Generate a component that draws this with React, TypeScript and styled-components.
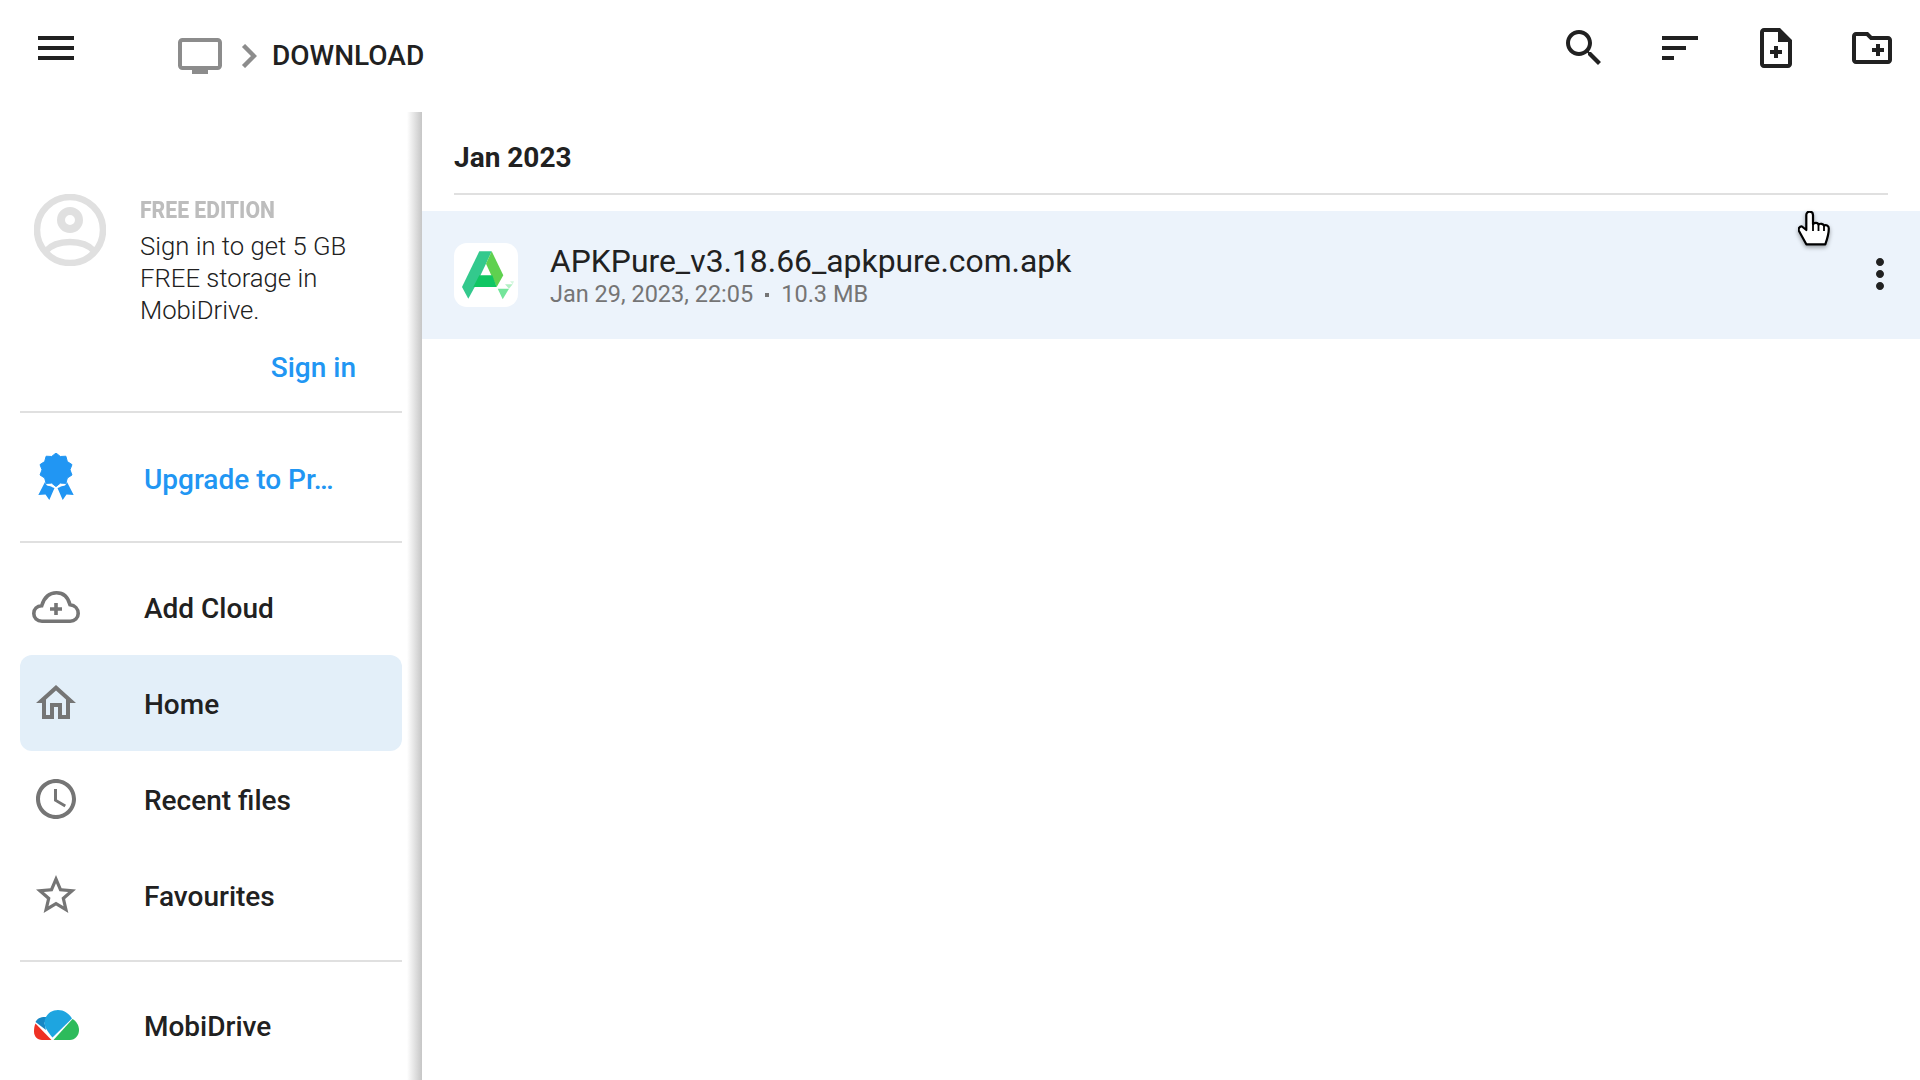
import React from 'react';
import styled, { createGlobalStyle } from 'styled-components';

const Global = createGlobalStyle`
  html, body { margin: 0; padding: 0; background: #fff; }
  #root { width: 1920px; height: 1080px; overflow: hidden; }
  * { box-sizing: border-box; }
`;

const Page = styled.div`
  position: relative;
  width: 1920px;
  height: 1080px;
  display: flex;
  flex-direction: column;
  overflow: hidden;
  background: #fff;
  font-family: Roboto, "Liberation Sans", sans-serif;
  color: #212121;
`;

const TopBar = styled.header`
  flex: 0 0 112px;
  display: flex;
  align-items: flex-start;
  padding: 24px 24px 0 32px;
`;

const IconButton = styled.div`
  width: 48px;
  height: 48px;
  flex: none;
  color: #212121;
  svg { display: block; width: 48px; height: 48px; fill: currentColor; }
`;

const RowAction = styled(IconButton)`
  margin-top: -2px;
`;

const Breadcrumb = styled.div`
  display: flex;
  align-items: center;
  height: 48px;
  margin: 8px 0 0 98px;
`;

const Chevron = styled.svg`
  margin-left: 19px;
`;

const Crumb = styled.span`
  margin-left: 15px;
  padding-bottom: 2px;
  font-size: 28px;
  font-weight: 500;
  color: #212121;
`;

const Actions = styled.div`
  margin-left: auto;
  display: flex;
  gap: 48px;
`;

const Body = styled.div`
  flex: 1;
  display: flex;
  min-height: 0;
`;

const Sidebar = styled.aside`
  flex: 0 0 422px;
  padding: 0 20px;
  background: linear-gradient(to right, #fff, #c6c6c6) right top / 15px 100% no-repeat;
`;

const Account = styled.section`
  height: 299px;
  display: flex;
  padding: 82px 0 0 14px;
`;

const Avatar = styled.svg`
  flex: none;
  width: 72px;
  height: 72px;
`;

const AccountText = styled.div`
  margin-left: 34px;
  padding-top: 4px;
  width: 230px;
`;

const Edition = styled.div`
  font-size: 23px;
  line-height: 26px;
  font-weight: 800;
  color: #bdbdbd;
  transform: scaleX(0.92);
  transform-origin: left center;
  white-space: nowrap;
`;

const Pitch = styled.p`
  margin: 6px 0 0;
  font-size: 25.7px;
  line-height: 32px;
  font-weight: 300;
  color: #212121;
`;

const SignIn = styled.div`
  margin-top: 24px;
  text-align: right;
  padding-right: 14px;
  font-size: 28px;
  line-height: 36px;
  font-weight: 500;
  color: #2196f3;
`;

const Divider = styled.hr`
  margin: 0;
  border: 0;
  height: 2px;
  background: #e0e0e0;
`;

const NavGroup = styled.nav<{ $top: number; $bottom: number }>`
  padding: ${p => p.$top}px 0 ${p => p.$bottom}px;
`;

const NavRow = styled.div<{ $active?: boolean }>`
  height: 96px;
  display: flex;
  align-items: center;
  border-radius: 12px;
  padding-left: 12px;
  background: ${p => (p.$active ? '#e3eff9' : 'transparent')};
`;

const NavIcon = styled.div`
  flex: none;
  width: 48px;
  height: 48px;
  display: flex;
  align-items: center;
  justify-content: center;
  color: #757575;
  svg { display: block; flex: none; fill: currentColor; }
`;

const BadgeIcon = styled.svg`
  margin-bottom: 3px;
`;

const NavLabel = styled.span<{ $accent?: boolean }>`
  margin-left: 64px;
  padding-top: 2px;
  font-size: 28px;
  font-weight: 500;
  color: ${p => (p.$accent ? '#2196f3' : '#212121')};
`;

const Main = styled.main`
  flex: 1;
  min-width: 0;
`;

const MonthHeader = styled.h2`
  height: 83px;
  margin: 0 32px 16px;
  padding-top: 28px;
  border-bottom: 2px solid #e0e0e0;
  font-size: 28px;
  line-height: 36px;
  font-weight: 700;
  color: #212121;
`;

const FileRow = styled.div`
  height: 128px;
  display: flex;
  align-items: center;
  padding: 0 16px 0 32px;
  background: #ecf3fb;
`;

const FileIcon = styled.svg`
  flex: none;
  width: 64px;
  height: 64px;
`;

const FileInfo = styled.div`
  flex: 1;
  margin: 0 0 2px 32px;
`;

const FileName = styled.div`
  padding-top: 1px;
  font-size: 31.85px;
  line-height: 38px;
  color: #212121;
`;

const FileMeta = styled.div`
  margin-top: 0;
  font-size: 23.5px;
  line-height: 28px;
  color: #757575;
`;

const MetaDot = styled.span`
  display: inline-block;
  width: 4px;
  height: 4px;
  margin: 0 12px;
  vertical-align: 5px;
  background: #757575;
`;

const Cursor = styled.svg`
  position: absolute;
  left: 1798px;
  top: 211px;
  width: 36px;
  height: 40px;
  filter: drop-shadow(0 2px 2px rgba(0, 0, 0, 0.35));
`;

const star = Array.from({ length: 20 }, (_, i) => {
  const a = (i * Math.PI) / 10 - Math.PI / 2;
  const r = i % 2 === 0 ? 16.8 : 14;
  return `${(18 + r * Math.cos(a)).toFixed(2)},${(16.8 + r * Math.sin(a)).toFixed(2)}`;
}).join(' ');

const Icon = ({ d }: { d: string }) => (
  <svg viewBox="0 0 24 24" width="48" height="48"><path d={d} /></svg>
);

const MENU = 'M3 18h18v-2H3v2zm0-5h18v-2H3v2zm0-7v2h18V6H3z';
const SEARCH = 'M15.5 14h-.79l-.28-.27C15.41 12.59 16 11.11 16 9.5 16 5.91 13.09 3 9.5 3S3 5.91 3 9.5 5.91 16 9.5 16c1.61 0 3.09-.59 4.23-1.57l.27.28v.79l5 4.99L20.49 19l-4.99-5zm-6 0C7.01 14 5 11.99 5 9.5S7.01 5 9.5 5 14 7.01 14 9.5 11.99 14 9.5 14z';
const SORT = 'M3 18h6v-2H3v2zM3 6v2h18V6H3zm0 7h12v-2H3v2z';
const NOTE_ADD = 'M11 11h2v2h2v2h-2v2h-2v-2H9v-2h2zm3-9H6c-1.1 0-2 .9-2 2v16c0 1.1.89 2 1.99 2H18c1.1 0 2-.9 2-2V8l-6-6zm4 18H6V4h7v5h5v11z';
const FOLDER_ADD = 'M20 6h-8l-2-2H4c-1.11 0-1.99.89-1.99 2L2 18c0 1.11.89 2 2 2h16c1.11 0 2-.89 2-2V8c0-1.11-.89-2-2-2zm0 12H4V6h5.17l2 2H20v10zM14 10h2v2h2v2h-2v2h-2v-2h-2v-2h2z';
const HOME = 'M12 5.69l5 4.5V18h-2v-6H9v6H7v-7.81l5-4.5M12 3L2 12h3v8h6v-6h2v6h6v-8h3L12 3z';
const CLOCK = 'M11.99 2C6.47 2 2 6.48 2 12s4.47 10 9.99 10C17.52 22 22 17.52 22 12S17.52 2 11.99 2zM12 20c-4.42 0-8-3.58-8-8s3.58-8 8-8 8 3.58 8 8-3.58 8-8 8zm.5-13H11v6l5.25 3.15.75-1.23-4.5-2.67z';
const STAR = 'M22 9.24l-7.19-.62L12 2 9.19 8.63 2 9.24l5.46 4.73L5.82 21 12 17.27 18.18 21l-1.63-7.03L22 9.24zM12 15.4l-3.76 2.27 1-4.28-3.32-2.88 4.38-.38L12 6.1l1.71 4.04 4.38.38-3.32 2.88 1 4.28L12 15.4z';
const MORE = 'M12 8c1.1 0 2-.9 2-2s-.9-2-2-2-2 .9-2 2 .9 2 2 2zm0 2c-1.1 0-2 .9-2 2s.9 2 2 2 2-.9 2-2-.9-2-2-2zm0 6c-1.1 0-2 .9-2 2s.9 2 2 2 2-.9 2-2-.9-2-2-2z';

export default function App() {
  return (
    <Page>
      <Global />
      <TopBar>
        <IconButton><Icon d={MENU} /></IconButton>
        <Breadcrumb>
          <svg width="44" height="36" viewBox="0 0 44 36" fill="none">
            <rect x="2" y="2" width="40" height="28" rx="2.5" stroke="#8c8c8c" strokeWidth="4" />
            <rect x="14" y="32" width="16" height="4" fill="#8c8c8c" />
          </svg>
          <Chevron width="16" height="24" viewBox="0 0 16 24" fill="none">
            <path d="M2.500 1.500l10.500 10.500L2.500 22.500" stroke="#8c8c8c" strokeWidth="4.400" />
          </Chevron>
          <Crumb>DOWNLOAD</Crumb>
        </Breadcrumb>
        <Actions>
          <IconButton><Icon d={SEARCH} /></IconButton>
          <IconButton><Icon d={SORT} /></IconButton>
          <IconButton><Icon d={NOTE_ADD} /></IconButton>
          <IconButton><Icon d={FOLDER_ADD} /></IconButton>
        </Actions>
      </TopBar>
      <Body>
        <Sidebar>
          <Account>
            <Avatar viewBox="0 0 72 72" fill="none" stroke="#e0e0e0">
              <circle cx="36" cy="36" r="33" strokeWidth="6.500" />
              <circle cx="36" cy="26" r="9" strokeWidth="8" />
              <path d="M12 57C18 50 27 48 36 48s18 2 24 9" strokeWidth="6.500" />
            </Avatar>
            <AccountText>
              <Edition>FREE EDITION</Edition>
              <Pitch>Sign in to get 5 GB FREE storage in MobiDrive.</Pitch>
              <SignIn>Sign in</SignIn>
            </AccountText>
          </Account>
          <Divider />
          <NavGroup $top={17} $bottom={15}>
            <NavRow>
              <NavIcon>
                <BadgeIcon width="36" height="47" viewBox="0 0 36 47">
                  <path d="M7 29L.3 42l7.200-.5L11.300 47l5.200-12c-2.500-.5-3.500-2-5.500-2s-2.500-1-4-4z" fill="#2196f3" />
                  <path d="M29 29l6.700 13-7.200-.5L24.700 47l-5.200-12c2.500-.5 3.500-2 5.500-2s2.500-1 4-4z" fill="#2196f3" />
                  <polygon points={star} fill="#2196f3" stroke="#2196f3" strokeWidth="1" strokeLinejoin="round" />
                </BadgeIcon>
              </NavIcon>
              <NavLabel $accent>Upgrade to Pr…</NavLabel>
            </NavRow>
          </NavGroup>
          <Divider />
          <NavGroup $top={16} $bottom={17}>
            <NavRow>
              <NavIcon>
                <svg width="48" height="32" viewBox="0 0 48 32">
                  <path fill="none" stroke="#757575" strokeWidth="3.600" d="M10 30.200C5 30.200 1.800 27 1.800 22.500 1.800 18 5 15 9.700 14.700 12 7 17 1.800 24.500 1.800 31 1.800 36 6 38 13.700c5 .5 8.200 4.300 8.200 8.800 0 4.500-3.500 7.700-8 7.700z" />
                  <path fill="none" stroke="#757575" strokeWidth="3.600" d="M18 18h12M24 12v12" />
                </svg>
              </NavIcon>
              <NavLabel>Add Cloud</NavLabel>
            </NavRow>
            <NavRow $active>
              <NavIcon><Icon d={HOME} /></NavIcon>
              <NavLabel>Home</NavLabel>
            </NavRow>
            <NavRow>
              <NavIcon><Icon d={CLOCK} /></NavIcon>
              <NavLabel>Recent files</NavLabel>
            </NavRow>
            <NavRow>
              <NavIcon><Icon d={STAR} /></NavIcon>
              <NavLabel>Favourites</NavLabel>
            </NavRow>
          </NavGroup>
          <Divider />
          <NavGroup $top={15} $bottom={0}>
            <NavRow>
              <NavIcon>
                <svg width="45" height="30" viewBox="0 0 45 30">
                  <path d="M1.500 12C3 8.500 7 6.500 13 7l-2.500 6L12 20z" fill="#1787c4" />
                  <path d="M18.500 27.500C13 21 10.500 17 10.500 13 10.500 5 17 0 24 0c6 0 11 3.500 14 8.500z" fill="#1ea5e0" />
                  <path d="M1.500 13.500L17.500 30H8c-5 0-8-4-8-8.500 0-3.500.5-6 1.500-8z" fill="#ee3124" />
                  <path d="M38.500 9L19.500 30H36c5 0 9-4.500 9-10 0-5-3-9-6.500-11z" fill="#2dbb5b" />
                </svg>
              </NavIcon>
              <NavLabel>MobiDrive</NavLabel>
            </NavRow>
          </NavGroup>
        </Sidebar>
        <Main>
          <MonthHeader>Jan 2023</MonthHeader>
          <FileRow>
            <FileIcon viewBox="0 0 64 64">
              <rect width="64" height="64" rx="13" fill="#fff" />
              <polygon points="25.300,8.300 37.700,8.300 32,20.700 21.700,42.300 14.300,55.700 8,44" fill="#33c98d" />
              <polygon points="37.700,8.300 49.300,32.300 42.700,44 32,20.700" fill="#5fd14f" />
              <polygon points="25.300,32.300 38.300,32.300 42.700,44 19.300,44" fill="#0fc663" />
              <polygon points="43.700,45.700 55,45.700 48.700,56.300" fill="#74e59b" />
              <polygon points="51,41.300 58.700,41.300 55,45.700" fill="#b2f0c4" />
              <polygon points="56,38.300 60,38.300 58.700,41.300" fill="#d4f7df" />
            </FileIcon>
            <FileInfo>
              <FileName>APKPure_v3.18.66_apkpure.com.apk</FileName>
              <FileMeta>Jan 29, 2023, 22:05<MetaDot />10.3 MB</FileMeta>
            </FileInfo>
            <RowAction><Icon d={MORE} /></RowAction>
          </FileRow>
        </Main>
      </Body>
      <Cursor viewBox="0 0 36 40">
        <path d="M8.300 33.300L1 20c-1.200-2.500 1-5 3-4.500l4.300 3.500V4c0-4.500 6.700-4.500 6.700 0v9c2-1.500 4.500-1.500 5.500 .5 2-1.300 4.500-.8 5.500 1 2.500-1 4.800.5 4.800 3 0 4-1 9-3.500 15.800z" fill="#fff" stroke="#000" strokeWidth="2.200" strokeLinejoin="round" />
        <path d="M15 13v7M20.500 13.500V20M26 14.500V20" fill="none" stroke="#000" strokeWidth="1.800" />
      </Cursor>
    </Page>
  );
}
